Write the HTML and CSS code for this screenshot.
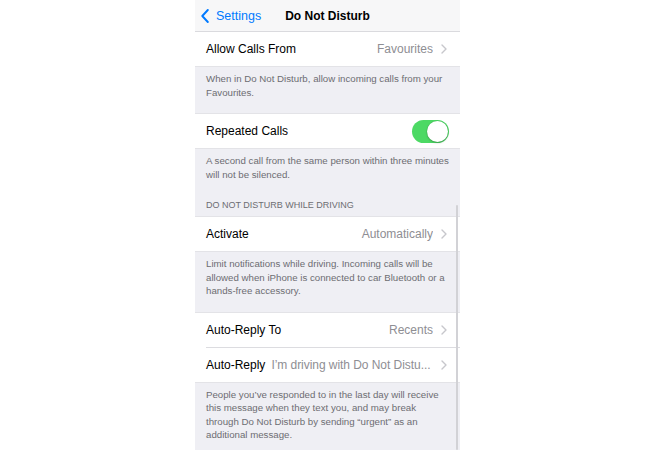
FILE: index.html
```html
<!DOCTYPE html>
<html lang="en">
<head>
<meta charset="utf-8">
<title>Do Not Disturb</title>
<link rel="stylesheet" href="styles.css">
</head>
<body>
<div class="screen">
  <header class="nav">
    <a class="back">
      <svg class="back-icon" width="8" height="14" viewBox="0 0 8 14"><path d="M6.8 1 L1.3 7 L6.8 13" fill="none" stroke="#007aff" stroke-width="1.9" stroke-linecap="round" stroke-linejoin="round"/></svg>
      <span>Settings</span>
    </a>
    <h1 class="title">Do Not Disturb</h1>
    <span></span>
  </header>

  <section class="group first">
    <div class="cell">
      <span class="label">Allow Calls From</span>
      <span class="value">Favourites</span>
      <svg class="chev" width="6" height="10" viewBox="0 0 6 10"><path d="M1 1 L5 5 L1 9" fill="none" stroke="#c7c7cc" stroke-width="1.4" stroke-linecap="round" stroke-linejoin="round"/></svg>
    </div>
  </section>
  <p class="footer">When in Do Not Disturb, allow incoming calls from your<br>Favourites.</p>

  <section class="group">
    <div class="cell">
      <span class="label">Repeated Calls</span>
      <span class="toggle on"><span class="knob"></span></span>
    </div>
  </section>
  <p class="footer tight">A second call from the same person within three minutes<br>will not be silenced.</p>

  <h2 class="section-header">Do Not Disturb While Driving</h2>
  <section class="group">
    <div class="cell">
      <span class="label">Activate</span>
      <span class="value">Automatically</span>
      <svg class="chev" width="6" height="10" viewBox="0 0 6 10"><path d="M1 1 L5 5 L1 9" fill="none" stroke="#c7c7cc" stroke-width="1.4" stroke-linecap="round" stroke-linejoin="round"/></svg>
    </div>
  </section>
  <p class="footer">Limit notifications while driving. Incoming calls will be<br>allowed when iPhone is connected to car Bluetooth or a<br>hands-free accessory.</p>

  <section class="group">
    <div class="cell">
      <span class="label">Auto-Reply To</span>
      <span class="value">Recents</span>
      <svg class="chev" width="6" height="10" viewBox="0 0 6 10"><path d="M1 1 L5 5 L1 9" fill="none" stroke="#c7c7cc" stroke-width="1.4" stroke-linecap="round" stroke-linejoin="round"/></svg>
    </div>
    <div class="cell">
      <span class="label">Auto-Reply</span>
      <span class="value inline">I’m driving with Do Not Distu...</span>
      <svg class="chev" width="6" height="10" viewBox="0 0 6 10"><path d="M1 1 L5 5 L1 9" fill="none" stroke="#c7c7cc" stroke-width="1.4" stroke-linecap="round" stroke-linejoin="round"/></svg>
    </div>
  </section>
  <p class="footer">People you’ve responded to in the last day will receive<br>this message when they text you, and may break<br>through Do Not Disturb by sending “urgent” as an<br>additional message.</p>

  <div class="scrollbar"></div>
</div>
</body>
</html>
```

FILE: styles.css
```css
html, body {
  margin: 0;
  padding: 0;
  background: #ffffff;
}

body {
  font-family: "Liberation Sans", Arial, sans-serif;
  color: #000000;
}

.screen {
  position: relative;
  width: 265px;
  height: 450px;
  margin-left: 195px;
  background: #efeff4;
  overflow: hidden;
}

.nav {
  height: 31px;
  border-bottom: 1px solid #dadade;
  background: #f7f7f8;
  display: grid;
  grid-template-columns: 1fr auto 1fr;
  align-items: center;
}

.back {
  display: flex;
  align-items: center;
  gap: 7px;
  padding-left: 6px;
  color: #007aff;
  font-size: 12.5px;
}

.back-icon {
  display: block;
}

.title {
  margin: 0;
  font-size: 12px;
  font-weight: bold;
  color: #000;
}

.group {
  background: #ffffff;
  border-top: 1px solid #e3e3e7;
  border-bottom: 1px solid #e3e3e7;
}

.group.first {
  border-top: 0;
}

.cell {
  height: 34px;
  display: flex;
  align-items: center;
  padding: 0 13px 0 11px;
  font-size: 12px;
}

.cell + .cell {
  border-top: 1px solid #dcdce0;
  margin-left: 11px;
  padding-left: 0;
}

.label {
  flex: none;
  white-space: nowrap;
}

.value {
  flex: 1;
  text-align: right;
  color: #8e8e93;
  white-space: nowrap;
  overflow: hidden;
}

.value.inline {
  text-align: left;
  margin-left: 6px;
  letter-spacing: -0.05px;
}

.chev {
  flex: none;
  margin-left: 8px;
  display: block;
}

.toggle {
  margin-left: auto;
  margin-right: -2px;
  width: 37px;
  height: 23px;
  border-radius: 12px;
  background: #4cd964;
  display: flex;
  align-items: center;
  justify-content: flex-end;
  padding: 0 1px;
  box-sizing: border-box;
}

.knob {
  width: 21px;
  height: 21px;
  border-radius: 50%;
  background: #ffffff;
  box-shadow: 0 1px 2px rgba(0, 0, 0, 0.25), 0 0 0 0.5px rgba(0, 0, 0, 0.08);
}

.footer {
  margin: 0;
  padding: 5px 11px 14px;
  font-size: 9.7px;
  line-height: 13.5px;
  color: #6d6d72;
  white-space: nowrap;
}

.footer.tight {
  padding-bottom: 0;
}

.section-header {
  margin: 0;
  padding: 18px 11px 4px;
  font-size: 9px;
  line-height: 13px;
  font-weight: normal;
  text-transform: uppercase;
  color: #6d6d72;
}

.scrollbar {
  position: absolute;
  left: 261px;
  top: 205px;
  bottom: 0;
  width: 2px;
  border-radius: 1px;
  background: #d2d2d6;
}
```
